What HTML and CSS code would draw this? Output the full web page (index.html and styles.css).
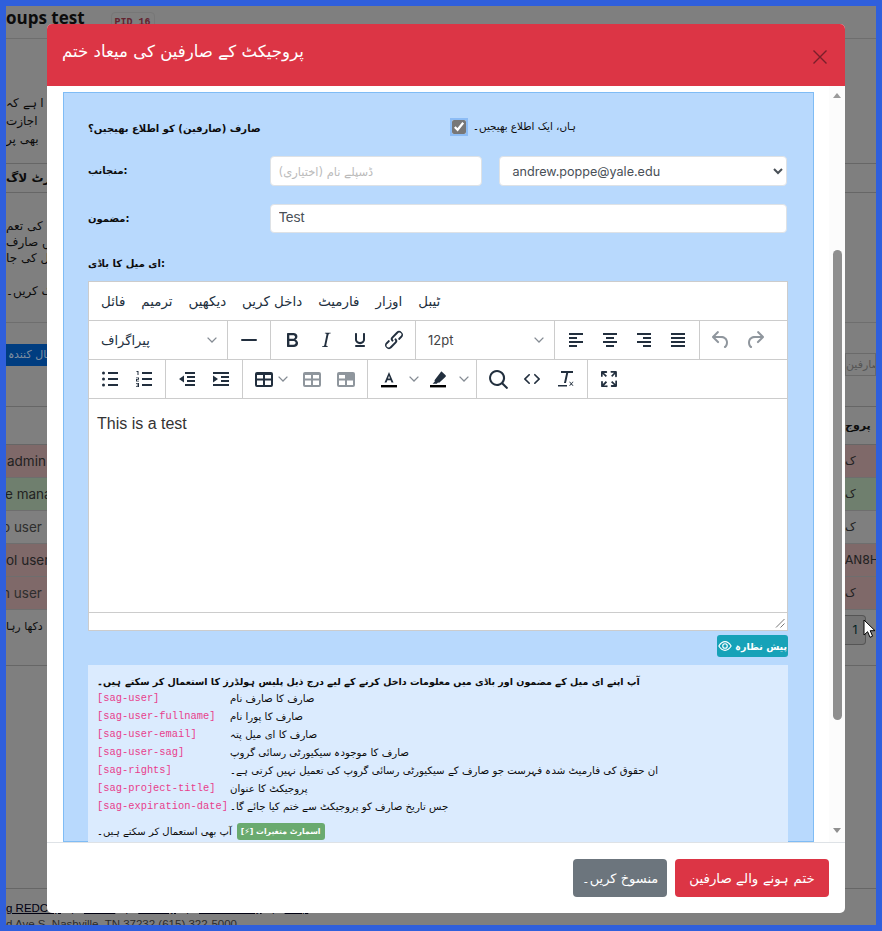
FILE: index.html
```html
<!DOCTYPE html>
<html lang="ur">
<head>
<meta charset="utf-8">
<title>Groups test</title>
<link rel="stylesheet" href="styles.css">
</head>
<body>
<svg class="defs" width="0" height="0" aria-hidden="true">
  <symbol id="i-undo" viewBox="0 0 24 24"><path d="M6.4 8H12c3.7 0 6.2 2 6.8 5.1.6 2.7-.4 5.6-2.3 6.8a1 1 0 0 1-1-1.8c1.1-.7 1.8-2.7 1.4-4.6-.5-2.1-2.1-3.5-4.9-3.5H6.4l3.3 3.3a1 1 0 1 1-1.4 1.4l-5-5a1 1 0 0 1 0-1.4l5-5a1 1 0 0 1 1.4 1.4L6.4 8z"/></symbol>
  <symbol id="i-chev" viewBox="0 0 10 10"><path d="M.6 2.6 5 7l4.4-4.4" fill="none" stroke="currentColor" stroke-width="1.3"/></symbol>
  <symbol id="i-table" viewBox="0 0 24 24"><path fill-rule="evenodd" d="M5 5h14a2 2 0 0 1 2 2v11a2 2 0 0 1-2 2H5a2 2 0 0 1-2-2V7a2 2 0 0 1 2-2zm0 3v3.500h6V8H5zm8 0v3.500h6V8h-6zm-8 5.500V18h6v-4.500H5zm8 0V18h6v-4.500h-6z"/></symbol>
</svg>

<div class="page">
  <header class="title-row">
    <h1 class="title">oups test</h1>
    <span class="pid">PID 16</span>
  </header>
  <section class="intro">
    <p>ا ہے کہ</p>
    <p>اجازت</p>
    <p>بھی پر</p>
  </section>
  <section class="alert-row">الرٹ لاگ</section>
  <section class="desc">
    <p>کی تعم</p>
    <p>میں صارف</p>
    <p>ل کی جا</p>
    <p class="desc-last">ک کریں۔</p>
  </section>
  <section class="actions">
    <span class="usage-btn">استعمال کنندہ</span>
    <span class="search-box">صارفین</span>
  </section>
  <div class="thead"><span></span><b>پروج</b></div>
  <div class="trow red"><span class="cut1">admin</span><span>ک</span></div>
  <div class="trow green"><span class="cut2">e manager</span><span>ک</span></div>
  <div class="trow"><span class="cut3">o user</span><span>ک</span></div>
  <div class="trow red"><span class="cut4">ol user</span><span class="cut-r">AN8HP</span></div>
  <div class="trow red"><span class="cut3">n user</span><span>ک</span></div>
  <div class="tfoot"><span class="showing">دکھا رہا</span><span class="pager">1</span></div>
  <footer class="page-foot">
    <div class="foot-links"><u>g REDCap</u><span>|</span><u>Terms</u><span>|</span><u>Privacy</u><span>|</span><u>Accessibility</u><span>|</span><u>Help</u></div>
    <div class="foot-addr">d Ave S, Nashville, TN 37232 (615) 322-5000</div>
  </footer>
</div>

<div class="modal">
  <div class="modal-head">
    <h2 class="modal-title">پروجیکٹ کے صارفین کی میعاد ختم</h2>
    <svg class="close" viewBox="0 0 14 14" width="14" height="14"><path d="M.5.5l13 13M13.5.5l-13 13"/></svg>
  </div>

  <div class="modal-body">
    <div class="panel">
      <div class="notify-row">
        <b class="lbl notify-lbl">صارف (صارفین) کو اطلاع بھیجیں؟</b>
        <input class="check" type="checkbox" checked>
        <span class="check-text">ہاں، ایک اطلاع بھیجیں۔</span>
      </div>
      <div class="form-row">
        <b class="lbl">منجانب:</b>
        <input class="field from-name" type="text" placeholder="ڈسپلے نام (اختیاری)">
        <select class="field from-mail"><option>andrew.poppe@yale.edu</option></select>
      </div>
      <div class="form-row subject-row">
        <b class="lbl">مضمون:</b>
        <input class="field subject" type="text" value="Test">
      </div>
      <b class="lbl body-lbl">ای میل کا باڈی:</b>

      <div class="editor">
        <div class="menubar">
          <span>فائل</span><span>ترمیم</span><span>دیکھیں</span><span>داخل کریں</span><span>فارمیٹ</span><span>اوزار</span><span>ٹیبل</span>
        </div>
        <div class="toolbar">
          <div class="grp sel-grp"><div class="sel sel-para"><span>پیراگراف</span><svg class="chev"><use href="#i-chev"/></svg></div></div>
          <div class="grp">
            <span class="btn"><svg viewBox="0 0 24 24"><rect x="4" y="11" width="16" height="2" rx="1"/></svg></span>
          </div>
          <div class="grp">
            <span class="btn"><svg viewBox="0 0 24 24"><path d="M7.8 19c-.3 0-.5 0-.6-.2l-.2-.5V5.7c0-.2 0-.4.2-.5l.6-.2h5c1.500 0 2.700.3 3.500 1 .7.6 1.100 1.400 1.100 2.500a3 3 0 0 1-.6 1.900c-.4.6-1 1-1.600 1.200.4.1.9.3 1.300.6s.8.7 1 1.200c.4.4.5 1 .5 1.600 0 1.300-.4 2.300-1.300 3-.8.7-2.100 1-3.800 1H7.800zm5-8.300c.6 0 1.200-.1 1.600-.5.4-.3.6-.7.6-1.300 0-1.100-.8-1.700-2.300-1.700H9.300v3.500h3.400zm.5 6c.7 0 1.300-.1 1.700-.4.4-.4.6-.9.6-1.500s-.2-1-.7-1.400c-.4-.3-1-.4-2-.4H9.400v3.800h4z"/></svg></span>
            <span class="btn"><svg viewBox="0 0 24 24"><path d="M16.700 4.700l-.1.900h-.3c-.6 0-1 0-1.400.3-.3.3-.4.6-.5 1.100l-2.100 9.800v.6c0 .5.4.8 1.400.8h.2l-.2.8H8l.2-.8h.2c1.100 0 1.800-.5 2-1.500l2-9.800.1-.5c0-.6-.4-.8-1.400-.8h-.3l.2-.9h5.800z"/></svg></span>
            <span class="btn"><svg viewBox="0 0 24 24"><path d="M16 5c.6 0 1 .4 1 1v5.500a4 4 0 0 1-.4 1.800l-1 1.400a5.300 5.300 0 0 1-5.500 1 5 5 0 0 1-1.600-1c-.5-.4-.8-.9-1.100-1.400a4 4 0 0 1-.4-1.800V6c0-.6.4-1 1-1s1 .4 1 1v5.500c0 .3 0 .6.2 1l.6.7a3.300 3.300 0 0 0 2.200.8 3.400 3.400 0 0 0 2.200-.8c.3-.2.4-.5.6-.8l.2-.9V6c0-.6.4-1 1-1zM8 17h8c.6 0 1 .4 1 1s-.4 1-1 1H8a1 1 0 0 1 0-2z"/></svg></span>
            <span class="btn"><svg viewBox="0 0 24 24"><path d="M6.200 12.300a1 1 0 0 1 1.400 1.400l-2 2a2 2 0 1 0 2.600 2.800l4.800-4.800a1 1 0 0 0 0-1.400 1 1 0 1 1 1.400-1.300 2.900 2.900 0 0 1 0 4L9.600 20a3.900 3.900 0 0 1-5.500-5.500l2-2zm11.600-.6a1 1 0 0 1-1.400-1.400l2-2a2 2 0 1 0-2.600-2.800L11 10.300a1 1 0 0 0 0 1.400A1 1 0 1 1 9.600 13a2.900 2.900 0 0 1 0-4L14.400 4a3.900 3.900 0 0 1 5.500 5.500l-2 2z"/></svg></span>
          </div>
          <div class="grp sel-grp"><div class="sel sel-size"><span class="sel-latin">12pt</span><svg class="chev"><use href="#i-chev"/></svg></div></div>
          <div class="grp">
            <span class="btn"><svg viewBox="0 0 24 24"><path d="M5 5h14v2H5zM5 9h8v2H5zM5 13h14v2H5zM5 17h8v2H5z"/></svg></span>
            <span class="btn"><svg viewBox="0 0 24 24"><path d="M5 5h14v2H5zM8 9h8v2H8zM5 13h14v2H5zM8 17h8v2H8z"/></svg></span>
            <span class="btn"><svg viewBox="0 0 24 24"><path d="M5 5h14v2H5zM11 9h8v2h-8zM5 13h14v2H5zM11 17h8v2h-8z"/></svg></span>
            <span class="btn"><svg viewBox="0 0 24 24"><path d="M5 5h14v2H5zM5 9h14v2H5zM5 13h14v2H5zM5 17h14v2H5z"/></svg></span>
          </div>
          <div class="grp grp-end">
            <span class="btn off"><svg viewBox="0 0 24 24"><use href="#i-undo"/></svg></span>
            <span class="btn off"><svg class="flip" viewBox="0 0 24 24"><use href="#i-undo"/></svg></span>
          </div>
        </div>
        <div class="toolbar">
          <div class="grp">
            <span class="btn"><svg viewBox="0 0 24 24"><path d="M10 5h10v2H10zM10 11h10v2H10zM10 17h10v2H10z"/><circle cx="5.500" cy="6" r="1.500"/><circle cx="5.500" cy="12" r="1.500"/><circle cx="5.500" cy="18" r="1.500"/></svg></span>
            <span class="btn"><svg viewBox="0 0 24 24"><path d="M10 5h10v2H10zM10 11h10v2H10zM10 17h10v2H10zM4.500 4H6.500v4H5.500V5H4.500zM4 10.500h3v2.200H5v1h2v.8H4v-2.500h2v-.7H4zM4 16h3v4H4v-.8h2v-.8H4.800v-.8H6v-.8H4z"/></svg></span>
          </div>
          <div class="grp">
            <span class="btn"><svg viewBox="0 0 24 24"><path d="M10 5h10v2H10zM12 9h8v2h-8zM12 13h8v2h-8zM10 17h10v2H10zM9 8.500v7L4 12z"/></svg></span>
            <span class="btn"><svg viewBox="0 0 24 24"><path d="M4 5h16v2H4zM12 9h8v2h-8zM12 13h8v2h-8zM4 17h16v2H4zM4 8.500v7L9 12z"/></svg></span>
          </div>
          <div class="grp">
            <span class="btn"><svg viewBox="0 0 24 24"><use href="#i-table"/></svg></span><span class="caret caret-tight"><svg class="chev"><use href="#i-chev"/></svg></span>
            <span class="btn off"><svg viewBox="0 0 24 24"><use href="#i-table"/></svg></span>
            <span class="btn off"><svg viewBox="0 0 24 24"><path fill-rule="evenodd" d="M5 5h14a2 2 0 0 1 2 2v11a2 2 0 0 1-2 2H5a2 2 0 0 1-2-2V7a2 2 0 0 1 2-2zm0 3v3.500h6V8H5zm0 5.500V18h6v-4.500H5zm8 0V18h6v-4.500h-6z"/></svg></span>
          </div>
          <div class="grp">
            <span class="btn"><svg viewBox="0 0 24 24"><path d="M12 5l4.500 10.500h-2l-.9-2.300H10.400l-.9 2.300h-2zm0 3.800L11 11.600h2z"/><rect class="swatch" x="4" y="18" width="16" height="2.400"/></svg></span><span class="caret caret-a"><svg class="chev"><use href="#i-chev"/></svg></span>
            <span class="btn"><svg viewBox="0 0 24 24"><path d="M15.600 4.500l4 3.800a1 1 0 0 1 0 1.400l-6.400 6.100-1.200-.2-1.300 1.100H6.600l2.200-2.100-.3-1.300 6.700-8.800z"/><rect class="swatch" x="4" y="18" width="16" height="2.400"/></svg></span><span class="caret caret-h"><svg class="chev"><use href="#i-chev"/></svg></span>
          </div>
          <div class="grp">
            <span class="btn"><svg viewBox="0 0 24 24"><path d="M16 17.300a8 8 0 1 1 1.400-1.400l4.300 4.400a1 1 0 0 1-1.400 1.400l-4.400-4.300zm-5-.3a6 6 0 1 0 0-12 6 6 0 0 0 0 12z"/></svg></span>
            <span class="btn"><svg viewBox="0 0 24 24"><path d="M9.800 15.700c.3.3.3.8 0 1-.3.4-.9.4-1.200 0l-4.400-4.100a.8.8 0 0 1 0-1.200l4.400-4.200c.3-.3.9-.3 1.200 0 .3.3.3.8 0 1.100L6 12l3.800 3.700zM14.200 15.700c-.3.3-.3.8 0 1 .4.400.9.400 1.200 0l4.400-4.100c.3-.3.3-.9 0-1.200l-4.400-4.200a.8.8 0 0 0-1.200 0c-.3.3-.3.8 0 1.100L18 12l-3.800 3.700z"/></svg></span>
            <span class="btn"><svg viewBox="0 0 24 24"><path d="M7 4h12v2h-4.800L12 16h-2l2.200-10H7zM4 18h9v1.600H4zM15 14.800h1l1.300 1.400 1.300-1.400h1l-1.800 2 1.800 2h-1l-1.300-1.400-1.300 1.400h-1l1.800-2z"/></svg></span>
          </div>
          <div class="grp grp-end">
            <span class="btn"><svg viewBox="0 0 24 24"><path d="M15.300 10l-1.200-1.300 2.900-3h-2.300a.9.9 0 1 1 0-1.700H19c.5 0 .9.400.9.900v4.400a.9.900 0 1 1-1.800 0V7l-2.900 3zm0 4l3 3v-2.300a.9.900 0 1 1 1.700 0V19c0 .5-.4.900-.9.900h-4.400a.9.900 0 1 1 0-1.800H17l-3-2.900 1.300-1.200zM10 15.400l-2.900 3h2.300a.9.900 0 1 1 0 1.700H5a.9.900 0 0 1-.9-.9v-4.400a.9.900 0 1 1 1.800 0V17l2.900-3 1.200 1.300zM8.700 10L5.700 7v2.300a.9.900 0 0 1-1.700 0V5c0-.5.4-.9.900-.9h4.400a.9.900 0 0 1 0 1.800H7l3 2.900-1.300 1.200z"/></svg></span>
          </div>
        </div>
        <div class="edit-area">This is a test</div>
        <div class="statusbar">
          <svg class="grip" viewBox="0 0 10 10" width="10" height="10"><path d="M9.500 1 1 9.500M9.500 5.500 5.500 9.500"/></svg>
        </div>
      </div>

      <div class="preview-row">
        <span class="preview-btn">
          <svg viewBox="0 0 16 16" width="14" height="14"><path d="M1 8c2-3.300 4.300-5 7-5s5 1.700 7 5c-2 3.300-4.300 5-7 5s-5-1.700-7-5z" fill="none" stroke="#fff" stroke-width="1.300"/><circle cx="8" cy="8" r="2.600" fill="none" stroke="#fff" stroke-width="1.300"/></svg>
          <b>پیش نظارہ</b>
        </span>
      </div>

      <div class="info">
        <b class="info-lead">آپ اپنے ای میل کے مضمون اور باڈی میں معلومات داخل کرنے کے لیے درج ذیل پلیس ہولڈرز کا استعمال کر سکتے ہیں۔</b>
        <div class="ph-list">
          <code>[sag-user]</code><span>صارف کا صارف نام</span>
          <code>[sag-user-fullname]</code><span>صارف کا پورا نام</span>
          <code>[sag-user-email]</code><span>صارف کا ای میل پتہ</span>
          <code>[sag-user-sag]</code><span>صارف کا موجودہ سیکیورٹی رسائی گروپ</span>
          <code>[sag-rights]</code><span>ان حقوق کی فارمیٹ شدہ فہرست جو صارف کے سیکیورٹی رسائی گروپ کی تعمیل نہیں کرتی ہے۔</span>
          <code>[sag-project-title]</code><span>پروجیکٹ کا عنوان</span>
          <code>[sag-expiration-date]</code><span>جس تاریخ صارف کو پروجیکٹ سے ختم کیا جائے گا۔</span>
        </div>
        <div class="smart-line">
          <span>آپ بھی استعمال کر سکتے ہیں۔</span>
          <span class="smart-badge"><span class="bolt">[⚡]</span> اسمارٹ متغیرات</span>
        </div>
      </div>
    </div>

    <div class="scrollbar">
      <i class="arrow-up"></i>
      <i class="thumb"></i>
      <i class="arrow-down"></i>
    </div>
  </div>

  <div class="modal-foot">
    <span class="foot-btn cancel">منسوخ کریں۔</span>
    <span class="foot-btn danger">ختم ہونے والے صارفین</span>
  </div>
</div>

<svg class="cursor" viewBox="0 0 14 20" width="14" height="20"><path d="M1 1v15l3.600-3.300 2.400 5.600 2.600-1.100-2.400-5.500H12z" fill="#fff" stroke="#000" stroke-width="1"/></svg>
</body>
</html>
```

FILE: styles.css
```css
* { box-sizing: border-box; }
html, body { margin: 0; height: 100%; overflow: hidden; }
body {
  position: relative;
  background: #2f5fdc;
  padding: 6px;
  font-family: "DejaVu Sans", "Liberation Sans", sans-serif;
  font-size: 11px;
  color: #0c0c0c;
}
.defs { position: absolute; }
p { margin: 0; }

/* page behind the modal, in the colours it has under the dark modal backdrop */
.page { height: 919px; background: #7f7f7f; overflow: hidden; display: flex; flex-direction: column; }
.page > * { flex: none; }
.title-row { height: 33px; border-bottom: 1px solid #6e6e6e; display: flex; align-items: flex-start; gap: 26px; }
.title { margin: 0; font: 700 17px/24px "Open Sans", sans-serif; }
.pid { font: 700 10px/20px "Liberation Mono", monospace; color: #63232f; border: 1px solid #777; border-radius: 4px; padding: 0 3px; margin-top: 6px; }
.intro { height: 124px; padding-top: 55px; font-size: 12px; }
.intro p { line-height: 18px; white-space: nowrap; }
.alert-row { height: 30px; border-top: 1px solid #666; border-bottom: 1px solid #666; line-height: 28px; font-size: 12px; font-weight: 700; white-space: nowrap; }
.desc { height: 130px; padding-top: 25px; border-bottom: 1px solid #6e6e6e; font-size: 12px; }
.desc p { line-height: 16px; white-space: nowrap; }
.desc .desc-last { margin-top: 17px; }
.actions { height: 84px; padding-top: 21px; display: flex; justify-content: space-between; align-items: flex-start; border-bottom: 1px solid #666; }
.usage-btn { background: #003d80; color: #7f8ea0; height: 22px; line-height: 22px; padding: 0 2px; white-space: nowrap; }
.search-box { margin-top: 9px; height: 23px; width: 31px; border: 1px solid #6a6a6a; color: #555; line-height: 21px; white-space: nowrap; overflow: hidden; }
.thead, .trow, .tfoot { display: flex; justify-content: space-between; align-items: center; white-space: nowrap; }
.thead { height: 38px; border-bottom: 1px solid #666; }
.thead b { width: 31px; overflow: hidden; }
.trow { height: 33px; border-bottom: 1px solid #6e6e6e; font: 13.500px "Inter", sans-serif; color: #222; }
.trow span:last-child { width: 31px; overflow: hidden; font-family: "DejaVu Sans", sans-serif; font-size: 12px; }
.trow .cut-r { font-family: "Inter", sans-serif; font-size: 14px; }
.red { background: #7f6969; }
.green { background: #6f7f6e; }
.cut1 { margin-left: 1px; }
.cut2 { margin-left: -1px; }
.cut3 { margin-left: -4px; color: #2e2e2e; }
.cut4 { margin-left: 0; }
.tfoot { height: 56px; border-bottom: 1px solid #666; padding-right: 10px; align-items: flex-start; }
.showing { margin-top: 10px; }
.pager { width: 21px; height: 30px; margin-top: 5px; border: 1px solid #555; border-left: 0; border-radius: 0 4px 4px 0; background: #747474; color: #022; font: 12px/28px "Inter", sans-serif; text-align: center; }
.page-foot { margin-top: 222px; border-top: 1px solid #666; font: 11.500px/16px "Liberation Sans", sans-serif; padding-top: 11px; }
.foot-links { display: flex; gap: 10px; color: #001; white-space: nowrap; }
.foot-addr { color: #2a2a2a; white-space: nowrap; }

/* modal */
.modal {
  position: absolute; left: 47px; top: 24px; z-index: 2;
  width: 798px; height: 889px;
  background: #fff; border-radius: 5px; overflow: hidden;
  display: flex; flex-direction: column;
}
.modal-head { height: 62px; flex: none; background: #dc3545; color: #fff; display: flex; justify-content: space-between; align-items: center; padding: 0 18px 0 15px; }
.modal-title { margin: 0 0 6px; font: 400 16.600px/24px "DejaVu Sans", sans-serif; }
.close { margin-top: 3px; }
.close path { fill: none; stroke: #7a1f2a; stroke-width: 1.400; }

.modal-body { height: 756px; flex: none; display: flex; justify-content: space-between; overflow: hidden; padding: 6px 0 0 16px; }
.panel { width: 751px; flex: none; background: #b8d9fd; border: 1px solid #7fbcf5; padding: 27px 26px 0 24px; }
.lbl { font-size: 10px; font-weight: 700; }

.notify-row { height: 36px; display: flex; align-items: flex-start; }
.notify-lbl { width: 364px; padding-top: 3px; }
.check { width: 14px; height: 14px; margin: 0; accent-color: #777; outline: 2px solid #8cbcf5; }
.check-text { margin-left: 7px; font-size: 10.400px; }

.form-row { display: flex; align-items: flex-start; }
.form-row .lbl { width: 182px; padding-top: 9px; }
.subject-row { margin-top: 18px; }
.field { height: 30px; border: 1px solid #dee2e6; border-radius: 4px; background: #fff; color: #495057; padding: 0 8px; font: 14px "Liberation Sans", sans-serif; }
.field::placeholder { color: #bbb; font: 11.500px "DejaVu Sans", sans-serif; }
.from-name { width: 213px; }
.from-mail { width: 288px; margin-left: 17px; padding-left: 8px; font: 12.600px "Inter", sans-serif; }
.subject { width: 518px; height: 29px; padding-bottom: 3px; }
.body-lbl { display: block; margin-top: 25px; height: 23px; }

.editor { width: 700px; height: 350px; background: #fff; border: 1px solid #ccc; display: flex; flex-direction: column; }
.menubar { height: 39px; flex: none; display: flex; align-items: center; gap: 16px; padding-left: 12px; border-bottom: 1px solid #ccc; font-size: 13.400px; color: #222f3e; }
.toolbar { height: 39px; flex: none; display: flex; border-bottom: 1px solid #ccc; }
.grp { display: flex; align-items: center; padding: 0 4px; border-right: 1px solid #ccc; }
.grp-end { border-right: 0; }
.btn { width: 34px; height: 34px; flex: none; display: flex; align-items: center; justify-content: center; }
.btn svg { width: 24px; height: 24px; fill: #222f3e; }
.btn .flip { transform: scaleX(-1); }
.btn.off svg { fill: #222f3e; opacity: .5; }
.swatch { fill: #000; }
.caret { height: 34px; flex: none; display: flex; align-items: center; }
.caret-tight { width: 17px; margin-left: -3px; }
.caret-a { width: 15px; justify-content: center; }
.caret-h { width: 17px; justify-content: center; }
.chev { width: 10px; height: 10px; color: #222f3e; opacity: .55; flex: none; }
.sel { width: 130px; height: 34px; display: flex; align-items: center; justify-content: space-between; padding: 0 6px 0 8px; font-size: 13px; color: #222f3e; }
.sel-latin { font: 13px "Inter", sans-serif; color: #444; }
.edit-area { height: 214px; flex: none; padding: 15px 8px; border-bottom: 1px solid #ccc; font: 16px/20px "Liberation Sans", sans-serif; color: #333; }
.statusbar { flex: 1; display: flex; justify-content: flex-end; align-items: flex-end; padding: 0 2px 2px 0; }
.grip path { fill: none; stroke: #777; stroke-width: 1; }

.preview-row { height: 34px; display: flex; justify-content: flex-end; padding-top: 4px; margin-right: -1px; }
.preview-btn { height: 22px; width: 71px; background: #17a2b8; color: #fff; border-radius: 3px; display: flex; align-items: center; justify-content: center; gap: 3px; font-size: 9.500px; }

.info { width: 700px; height: 200px; background: #dbebfe; padding: 9px 9px 0; }
.info-lead { display: block; line-height: 15px; font-size: 9.500px; }
.ph-list { display: grid; grid-template-columns: 133px 1fr; grid-auto-rows: 18px; align-items: center; font-size: 10.200px; }
.ph-list code { font: 10.400px "Liberation Mono", monospace; color: #e83e8c; white-space: nowrap; }
.smart-line { display: flex; align-items: center; gap: 5px; margin-top: 8px; font-size: 10px; }
.smart-badge { background: #6aaa6f; color: #fff; font-weight: 700; font-size: 7.800px; line-height: 17px; padding: 0 4px; border-radius: 3px; }
.bolt { font-family: "DejaVu Sans", sans-serif; }

.scrollbar { flex: none; width: 16px; margin-top: -6px; background: #fcfcfc; height: 756px; display: flex; flex-direction: column; align-items: center; padding-top: 7px; }
.scrollbar i { display: block; }
.arrow-up { width: 0; height: 0; border: 4.500px solid transparent; border-top: 0; border-bottom: 5px solid #9a9a9a; }
.thumb { width: 9px; height: 470px; margin-top: 152px; border-radius: 5px; background: #8f8f8f; }
.arrow-down { width: 0; height: 0; margin-top: 108px; border: 4.500px solid transparent; border-bottom: 0; border-top: 5px solid #8f8f8f; }

.modal-foot { flex: 1; border-top: 1px solid #dee2e6; display: flex; justify-content: flex-end; align-items: flex-start; gap: 8px; padding: 16px 16px 0 0; }
.foot-btn { height: 38px; border-radius: 4px; color: #fff; display: flex; align-items: center; justify-content: center; font-size: 13px; }
.cancel { width: 94px; background: #6c757d; }
.danger { width: 154px; background: #dc3545; font-size: 13.400px; }

.cursor { position: absolute; left: 863px; top: 619px; z-index: 3; }
```
